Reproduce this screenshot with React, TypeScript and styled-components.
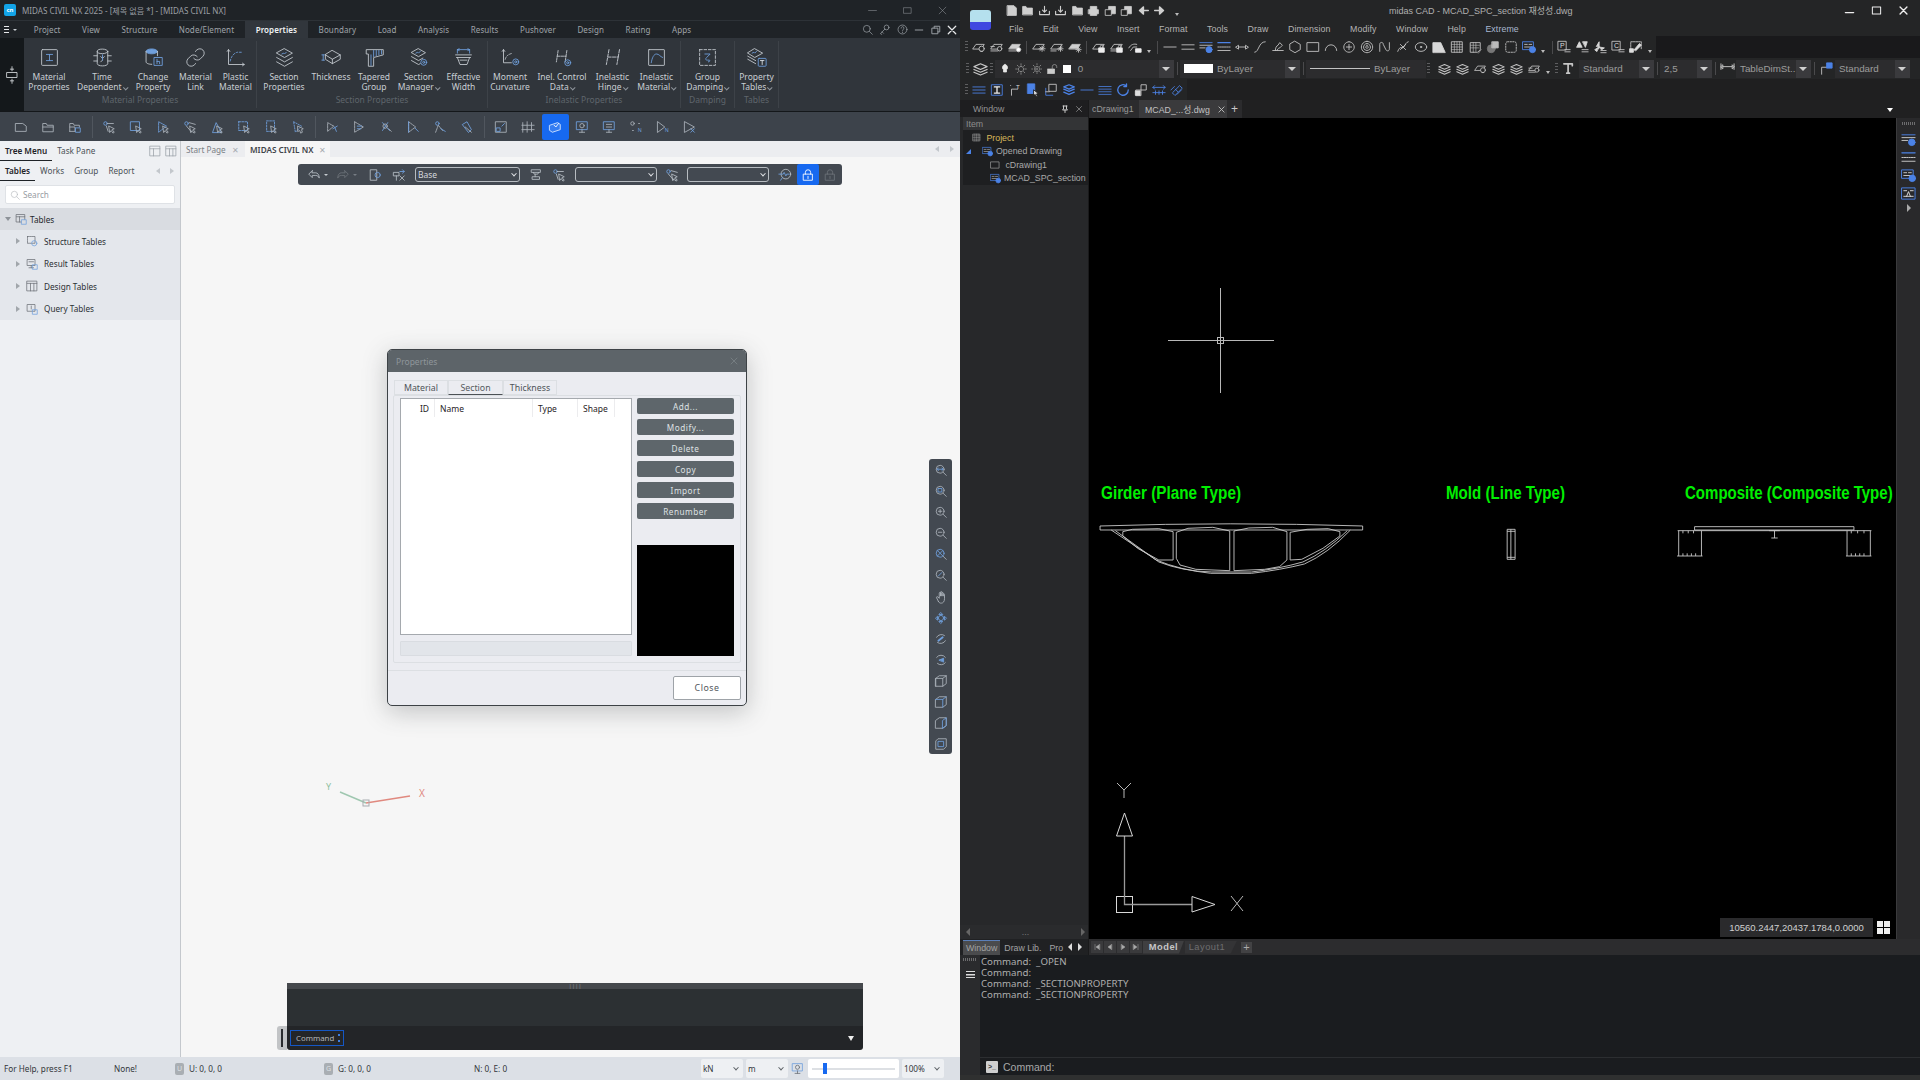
import React from 'react'
import styled, { createGlobalStyle } from 'styled-components'

const GlobalStyle = createGlobalStyle`
  html, body { margin: 0; padding: 0; width: 1920px; height: 1080px; overflow: hidden; background: #000; }
  #root { width: 1920px; height: 1080px; }
  * { box-sizing: border-box; }
  body { font-family: "Noto Sans", "Noto Sans CJK KR", sans-serif; }
`

const BLUE = '#6f9fdc'
const CADBLUE = '#4b82e6'

const Svg = styled.svg<{ $s: number; $c?: string; $w?: number }>`
  width: ${({ $s }) => $s}px;
  height: ${({ $s }) => $s}px;
  flex: none;
  fill: none;
  stroke: currentColor;
  stroke-width: ${({ $w }) => $w ?? 1};
  color: ${({ $c }) => $c ?? 'inherit'};
  stroke-linecap: round;
  stroke-linejoin: round;
`

const Ac = ({ children }: { children: React.ReactNode }) => <g stroke={BLUE}>{children}</g>

const gear = (cx: number, cy: number) => (
  <Ac>
    <circle cx={cx} cy={cy} r="3.4" />
    <circle cx={cx} cy={cy} r="1.2" />
  </Ac>
)

const hFrame = (
  <g strokeDasharray="3 1.2">
    <path d="M7 4 5 17M17 4l-2 13M6 10.500h10" />
  </g>
)

const ribbonIcons: Record<string, React.ReactNode> = {
  material: (
    <>
      <rect x="3" y="3" width="18" height="18" rx="1" />
      <path d="M8.500 8.500h7M12 8.500v7M8.500 15.500h7" stroke={BLUE} />
    </>
  ),
  timeDep: (
    <>
      <ellipse cx="12" cy="5" rx="6" ry="2.600" />
      <path d="M6 5v14c0 1.500 2.700 2.600 6 2.600s6-1.100 6-2.600V5" />
      <path d="M2 10h4M18 10h4M2 16h4M18 16h4M10 11l2 2 2-2M10 17l2-2" />
      <Ac><path d="M12 9v6" /></Ac>
    </>
  ),
  change: (
    <>
      <ellipse cx="10" cy="5" rx="6.500" ry="2.800" fill={BLUE} stroke={BLUE} />
      <path d="M3.500 5v12c0 1.500 2.800 2.800 6.500 2.800" />
      <path d="M16.500 5v5" />
      <rect x="13" y="12" width="9" height="9" stroke={BLUE} />
      <path d="M16 14v5M16 16.500h3v2.500" stroke={BLUE} />
    </>
  ),
  link: (
    <>
      <path d="M10 13a5 5 0 0 0 7.540.54l3-3a5 5 0 0 0-7.070-7.070l-1.720 1.710" />
      <path d="M14 11a5 5 0 0 0-7.540-.54l-3 3a5 5 0 0 0 7.070 7.070l1.710-1.710" />
    </>
  ),
  plastic: (
    <>
      <path d="M4 3v17h18M2.500 5 4 3l1.500 2M20 18.500l2 1.500-2 1.500" />
      <path d="M6 16c1-5 4-9 8-10h5" stroke={BLUE} strokeDasharray="2 2" />
    </>
  ),
  section: (
    <>
      <path d="M12 2 21 7l-9 5-9-5zM3 12l9 5 9-5M3 17l9 5 9-5" />
      <path d="M9 8l2-1 1 1 2-2" stroke={BLUE} />
    </>
  ),
  thickness: (
    <>
      <path d="M13 4l9 5-9 5-8-5zM5 9v5l8 5 9-5V9M13 14v5" />
      <path d="M1 9h3M2.500 9v6M1 15h3" stroke={BLUE} />
    </>
  ),
  tapered: (
    <>
      <path d="M3 3h19v6l-11 3v10H5V8H3z" />
      <path d="M11 4v7M14 4v6M17 4v5M20 4v4M8 9v12" stroke={BLUE} />
    </>
  ),
  manager: (
    <>
      <path d="M12 2 20 6.500 12 11 4 6.500zM4 11l8 4.500 5-2.800M4 15.500 12 20l2-1" />
      <path d="M9 7l2-1 1 1 2-2" stroke={BLUE} />
      {gear(18, 17.5)}
    </>
  ),
  effective: (
    <>
      <path d="M3 9h18M4 12h16M5 12l3 8h8l3-8M8 15h8" />
      <path d="M5 3h14M5 3v4M19 3v4M7 2l-2 1 2 1M17 2l2 1-2 1" stroke={BLUE} />
    </>
  ),
  moment: (
    <>
      <path d="M4 3v15h9M2.500 5 4 3l1.500 2" />
      <path d="M6 14c1-4 4-6 9-7" strokeDasharray="2 2" />
      {gear(18, 17)}
    </>
  ),
  inelControl: (
    <>
      {hFrame}
      {gear(18, 18)}
    </>
  ),
  hinge: (
    <g stroke="#cfd4da" strokeDasharray="3.500 1.500">
      <path d="M8 3 5 20M20 3l-3 17M7 11.500h12" />
    </g>
  ),
  inelMaterial: (
    <>
      <rect x="3" y="3" width="18" height="18" rx="0.5" />
      <path d="M6 18c1-6 3-10 6-10s4 3 7 4" stroke={BLUE} />
    </>
  ),
  damping: (
    <>
      <path d="M3 3h18v18H3z" strokeDasharray="3 2" />
      <path d="M9 8h6l-4 4c-2 2-1 3 1 3h2c1 0 1 2-1 2" stroke={BLUE} />
    </>
  ),
  propTables: (
    <>
      <path d="M10 2l9 5-9 5-8-5zM2 10.500l9 5M2 14l9 5" />
      <path d="M7 7l2-1 1 1 2-2" stroke={BLUE} />
      <rect x="14" y="13" width="9" height="9" rx="1" stroke={BLUE} />
      <path d="M16.500 15.500h4M18.500 15.500v4.500" stroke="#dfe3e8" />
    </>
  ),
}

const cursor = <path d="M8 7l6 3-2.500 1L14 14l-1.500 1-2-3L9 14z" />

const toolIcons: Record<string, React.ReactNode> = {
  doc: <path d="M2 4h8l4 3v6H2z" />,
  folder: <path d="M2 13V4h4l1 2h7v7zM2 8h12" />,
  folderSave: (
    <>
      <path d="M2 13V4h4l1 2h6v2" />
      <path d="M2 8h6v5H2" />
      <rect x="9" y="9" width="5" height="5" stroke={BLUE} />
    </>
  ),
  sel1: (<><circle cx="4" cy="4" r="2" stroke={BLUE} /><path d="M6 4h7M5 7l2 6" />{cursor}</>),
  sel2: (<><rect x="2" y="2" width="10" height="10" stroke={BLUE} />{cursor}</>),
  sel3: (<><path d="M3 2l9 5-9 7z" stroke={BLUE} strokeDasharray="2 1" />{cursor}</>),
  sel4: (<><circle cx="4" cy="4" r="2" stroke={BLUE} /><path d="M4 7l6 7M7 3l7 2" />{cursor}</>),
  sel5: (<><path d="M3 14 7 3l6 11z" stroke={BLUE} />{cursor}</>),
  sel6: (<><rect x="2" y="2" width="10" height="10" stroke={BLUE} strokeDasharray="2 1.500" />{cursor}</>),
  sel7: (<><rect x="3" y="1" width="9" height="12" stroke={BLUE} strokeDasharray="2 1.500" />{cursor}</>),
  sel8: (<><path d="M3 2l9 5-7 7z" stroke={BLUE} strokeDasharray="1.500 1.500" /><path d="M8 7l6 3-2 1 1 3-2 1-1-3-2 1z" /></>),
  act1: (<><path d="M3 3l7 4-7 6z" strokeDasharray="2 1" /><path d="M9 10l5-3M11 8l2 5" stroke={BLUE} /></>),
  act2: (<><path d="M3 2l10 6-10 6z" strokeDasharray="3 1" /><path d="M6 7h5M6 10h4" stroke={BLUE} /></>),
  act3: (<><path d="M4 3l8 9M10 3l-6 9" stroke={BLUE} /><circle cx="7" cy="7" r="2.500" /><path d="M11 10l3 3" /></>),
  act4: (<><path d="M3 2l8 6-8 6z" strokeDasharray="2 1" /><path d="M3 2v12M10 9l4 4" stroke={BLUE} /></>),
  act5: (<><circle cx="5" cy="4" r="2" stroke={BLUE} /><path d="M3 14l3-8 5 6" strokeDasharray="2 1" /><path d="M9 10l5 3" stroke={BLUE} /></>),
  act6: (<><path d="M3 5l5-3 5 9-3 3z" stroke={BLUE} /><path d="M6 8l7 6" /></>),
  view1: (<><rect x="2" y="2" width="12" height="12" /><rect x="3" y="9" width="4" height="4" stroke={BLUE} /><path d="M9 7l3-3" stroke={BLUE} /></>),
  view2: (<path d="M2 3v11M7 2v12M12 3v10M1 6h14M1 11h14" />),
  view3: (<><path d="M2 6l9-3 3 2v6l-9 3-3-2z" fill="#ffffff22" stroke="#d7e7ff" /><path d="M7 6l2 2 3-4" stroke="#fff" /></>),
  view4: (<><rect x="2" y="2" width="12" height="9" stroke={BLUE} /><circle cx="8" cy="6.500" r="2.500" /><path d="M8 11v3M5 14h6" /></>),
  view5: (<><rect x="2" y="2" width="12" height="9" stroke={BLUE} /><path d="M5 5h6M5 8h6M8 11v3M5 14h6" /></>),
  view6: (<><circle cx="4" cy="4" r="2" /><path d="M11 4h1M4 12h1" /><text x="10" y="14" fontSize="6" stroke="none" fill={BLUE}>N</text></>),
  view7: (<><path d="M2 2l8 6-8 6z" /><text x="10" y="14" fontSize="6" stroke="none" fill={BLUE}>N</text></>),
  view8: (<><path d="M2 2l11 6-11 6z" /><path d="M9 10l4 4M13 10l-4 4" stroke={BLUE} /></>),
  undo: <path d="M6 3 2 7l4 4V8.500h4c2 0 3 1 4 3 0-4-2-6-4-6H6z" />,
  redo: <path d="M10 3l4 4-4 4V8.500H6c-2 0-3 1-4 3 0-4 2-6 4-6h4z" />,
  page: (<><path d="M3 2h7v12H3z" /><circle cx="11" cy="8" r="3" stroke={BLUE} /></>),
  mesh: (<><path d="M2 5h6v4H2zM5 9v5M9 9l5 5M14 9l-5 5" /><path d="M9 4h5M12 2l2 2-2 2" stroke={BLUE} /></>),
  ibeam: <path d="M3 2h10v3H3zM5 5l1 2h4l1-2M7 7v3M4 10h8v3H4z" />,
  lock: (<><rect x="3" y="7" width="10" height="7" /><path d="M5 7V5a3 3 0 0 1 6 0v2M8 9.500v2.500" /></>),
  chat: (<><circle cx="9" cy="7" r="5.500" /><path d="M1 7h5l1-2 2 4 1-2h3M5 11l-2 3" stroke={BLUE} /></>),
  zFit: (<><circle cx="7" cy="6" r="4.500" /><path d="M4 6h6M5 4.500 3.500 6 5 7.500M9 4.500 10.500 6 9 7.500" stroke={BLUE} /><path d="M10.500 9.500 14 13" /></>),
  zBox: (<><circle cx="7" cy="6" r="4.500" /><rect x="5" y="4" width="4" height="4" stroke={BLUE} /><path d="M10.500 9.500 14 13" /></>),
  zIn: (<><circle cx="7" cy="6" r="4.500" /><path d="M5 6h4M7 4v4M10.500 9.500 14 13" /></>),
  zOut: (<><circle cx="7" cy="6" r="4.500" /><path d="M5 6h4M10.500 9.500 14 13" /></>),
  zDyn: (<><circle cx="7" cy="6" r="4.500" stroke={BLUE} /><path d="M4 3l6 6M10 3 4 9" stroke={BLUE} /><path d="M10.500 9.500 14 13" /></>),
  zPrev: (<><circle cx="7" cy="6" r="4.500" /><path d="M5 8l4-4" stroke={BLUE} /><path d="M10.500 9.500 14 13" /></>),
  hand: <path d="M5 13 3 9c-.5-1 .5-2 1.500-1L6 9.500V3.500c0-1 1.500-1 1.500 0V7 2.500c0-1 1.500-1 1.500 0V7 3.500c0-1 1.500-1 1.500 0V7 5c0-1 1.500-1 1.500 0v5c0 3-1.500 5-3.500 5H7.500C6.500 15 5.500 14 5 13z" />,
  orbit: (<><circle cx="8" cy="8" r="3" stroke={BLUE} /><path d="M8 2l2 2H6zM8 14l2-2H6zM2 8l2-2v4zM14 8l-2-2v4z" stroke={BLUE} /></>),
  rotate: (<><path d="M3 6a6 6 0 0 1 9-2M13 10a6 6 0 0 1-9 2" /><path d="M5 10l5-4" stroke={BLUE} strokeWidth="2" /></>),
  rotate2: (<><path d="M3 5a6 6 0 0 1 10 0M13 11a6 6 0 0 1-9 1" /><path d="M6 8l5-2v4z" stroke={BLUE} fill={BLUE} /></>),
  cube: <path d="M2 5l4-3h8v9l-4 3H2zM2 5h8v9M10 5l4-3M2 5v9" />,
  cubeBlue: (<><path d="M2 5l4-3h8v9l-4 3H2z" /><path d="M2 5h8l4-3M10 5v9" stroke={BLUE} /></>),
  cubeSide: (<><path d="M2 5l4-3h8v9l-4 3H2z" /><path d="M10 5l4-3v9l-4 3z" stroke={BLUE} /></>),
  cubeFront: (<><path d="M5 2h9v9l-3 3H2V5z" /><rect x="5" y="5" width="6" height="6" stroke={BLUE} /></>),
  paneA: (<><rect x="1.500" y="1.500" width="13" height="13" /><path d="M1.500 5h13M6 5v9.500" /></>),
  paneB: (<><rect x="1.500" y="1.500" width="13" height="13" /><path d="M1.500 5h13M6 5v9.500M10.500 5v9.500" /></>),
  tableT: (<><rect x="2" y="2" width="11" height="10" /><path d="M2 5h11M6 5v7" /><rect x="9" y="9" width="6" height="6" stroke={BLUE} fill="#d9dce1" /></>),
  tableS: (<><rect x="2" y="2" width="10" height="9" strokeDasharray="2 1" /><circle cx="11" cy="11" r="3.500" stroke={BLUE} /></>),
  tableR: (<><rect x="2" y="2" width="10" height="8" /><path d="M4 5h6M7 10v3M4 13h6" /><rect x="9" y="9" width="6" height="6" stroke={BLUE} /></>),
  tableD: (<><rect x="1.500" y="1.500" width="13" height="13" /><path d="M1.500 4.500h13M6 4.500v10M10.500 4.500v10" /></>),
  tableQ: (<><rect x="2" y="2" width="10" height="9" /><path d="M7 4v4" /><rect x="9" y="9" width="6" height="6" stroke={BLUE} /></>),
}

const cadSlab = <path d="M1 10 4.500 5H14l-3 5z" />
const cadIcons: Record<string, React.ReactNode> = {
  qDoc: <path d="M3 2h8l3 3v9H3z" fill="#cfcfcf" stroke="#cfcfcf" />,
  qFolder: <path d="M2 13V3h4l1 2h7v8z" fill="#cfcfcf" stroke="#cfcfcf" />,
  qImport: <path d="M2 9v4h12V9M8 3v7M5.500 7.500 8 10l2.500-2.500" strokeWidth="1.400" />,
  qPrint: <path d="M2 7h12v5H2zM4 7V3h8v4M4 12v2h8v-2" fill="#cfcfcf" stroke="#cfcfcf" />,
  qSheet: (<><path d="M6 3h8v9H6z" fill="#cfcfcf" stroke="#cfcfcf" /><rect x="2" y="7" width="7" height="7" fill="#222" /></>),
  qBack: <path d="M14 8H4M8 3.500 3 8l5 4.500z" fill="#cfcfcf" stroke="#cfcfcf" strokeWidth="1.600" />,
  qFwd: <path d="M2 8h10M8 3.500 13 8l-5 4.500z" fill="#cfcfcf" stroke="#cfcfcf" strokeWidth="1.600" />,
  slabBulb: (<>{cadSlab}<circle cx="11" cy="10" r="3" fill="#242526" /><path d="M10 13h2" /></>),
  slabLines: (<>{cadSlab}<path d="M1 12.500h8M1 7.500h4" /><circle cx="11" cy="10" r="2.500" fill="#242526" /></>),
  slabFill: (<><path d="M1 10 4.500 5H14l-3 5z" fill="#cfcfcf" /><path d="M1 12.500h8" /><circle cx="12" cy="11" r="2.500" fill="#fff" /></>),
  slabStar: (<>{cadSlab}<path d="M8 10h7M11.500 7v6M9 8l5 4M14 8l-5 4" /></>),
  slabStarL: (<>{cadSlab}<path d="M1 12.500h6M9 10h6M12 7v6M10 8l4 4M14 8l-4 4" /></>),
  slabStarF: (<><path d="M1 10 4.500 5H14l-3 5z" fill="#cfcfcf" /><path d="M9 11h6M12 8v6M10 9l4 4M14 9l-4 4" /></>),
  slabLock: (<>{cadSlab}<rect x="8" y="9" width="6" height="5" fill="#eee" stroke="#eee" /><path d="M9.500 9V7.500a1.500 1.500 0 0 1 3 0V9" /></>),
  slabLockL: (<>{cadSlab}<path d="M1 12.500h6" /><rect x="8" y="9" width="6" height="5" fill="#eee" stroke="#eee" /><path d="M9.500 9V7.500a1.500 1.500 0 0 1 3 0V9" /></>),
  slabHook: (<><path d="M1 9c2-4 6-5 9-4M3 12l3-4h4" /><rect x="9" y="10" width="6" height="4" fill="#eee" stroke="#eee" /></>),
  line: <path d="M1 8h14" />,
  dbl: <path d="M1 5.500h14M1 10.500h14" />,
  lineInfo: (<><path d="M1 3h14" stroke={CADBLUE} /><path d="M1 6h14M1 9h6" /><circle cx="11.500" cy="11" r="3.500" fill={CADBLUE} stroke={CADBLUE} /></>),
  lines: (<><path d="M1 3h14" stroke={CADBLUE} strokeWidth="1.400" /><path d="M1 8h14" strokeDasharray="1.500 1" /><path d="M1 12h14" /></>),
  arrowLine: <path d="M4 8h8M1 8l3-2v4zM15 8l-3-2v4z" />,
  curve: <path d="M2 14c5 0 4-12 12-12" />,
  pen: <path d="M2 12h12M5 12c0-3 1-5 3-6l2-3 3 3-3 3c-2 .5-3 2-3 3" />,
  hexagon: <path d="M8 1.500 14 5v6l-6 3.500L2 11V5z" />,
  rect: <rect x="1.500" y="3" width="13" height="10" />,
  arc: <path d="M1.500 12a6.500 6.500 0 0 1 13 0" />,
  circlePlus: <path d="M8 2a6 6 0 1 0 .01 0M5 8h6M8 5v6" />,
  circles: <path d="M8 1.500a6.500 6.500 0 1 0 .01 0M8 4a4 4 0 1 0 .01 0M8 6.500a1.500 1.500 0 1 0 .01 0" />,
  polyN: <path d="M2 13V5c0-3 4-3 4 0l3 6c1 2 4 2 4-1V3" />,
  polyM: <path d="M2 13c3-8 5-2 7-5s2-5 5-6M5 5l6 6M11 5l-6 6" />,
  ellipseDot: (<><ellipse cx="8" cy="8" rx="6.500" ry="5" /><circle cx="8" cy="8" r="0.800" /></>),
  triFill: <path d="M1 14V3h9l5 11z" fill="#d8d8d8" stroke="#d8d8d8" />,
  hatch: (<><rect x="2" y="2" width="12" height="12" /><path d="M2 5h12M2 8h12M2 11h12M5 2v12M8 2v12M11 2v12" strokeWidth="0.700" /></>),
  hatchPen: (<><path d="M3 3h11v8l-3 3H3z" /><path d="M3 6h10M3 9h9M6 3v11M9 3v10M12 15l3-4" strokeWidth="0.700" /></>),
  blobs: (<><circle cx="6" cy="10" r="4.500" fill="#777" stroke="#777" /><rect x="7" y="2" width="7" height="7" fill="#bbb" stroke="#bbb" /></>),
  dashSq: <rect x="2" y="2" width="12" height="12" rx="2" strokeDasharray="1.500 1.500" />,
  gridInfo: (<><rect x="1" y="2" width="12" height="9" stroke={CADBLUE} /><path d="M3 5h3M8 5h3M3 8h8" /><circle cx="12" cy="11" r="3.500" fill={CADBLUE} stroke={CADBLUE} /></>),
  gridBlue: (<><rect x="1" y="2" width="14" height="12" stroke={CADBLUE} /><path d="M3 5h3M10 5h3M3 11h10M6 11l2-5 2 5" stroke="#ddd" /></>),
  letterP: (<><rect x="1.500" y="1.500" width="9" height="10" /><text x="3.500" y="9.500" fontSize="8" stroke="none" fill="#ddd">P</text><path d="M9 11h6M9 13.500h6" /></>),
  triPair: (<><path d="M2 8l3-6 3 6zM9 2h5l-2 6z" fill="#d8d8d8" stroke="#d8d8d8" /><path d="M8 11h7M8 13.500h7" /></>),
  fan: (<><path d="M7 8V2l-3 5zM7 8l6 1-3 2zM7 8l-5 3 2 2z" fill="#d8d8d8" stroke="#d8d8d8" /><path d="M9 12h6M9 14.500h6" /></>),
  letterC: (<><rect x="1.500" y="1.500" width="9" height="10" /><text x="3.500" y="9.500" fontSize="8" stroke="none" fill="#ddd">C</text><path d="M9 11h6M9 13.500h6" /></>),
  sqPen: (<><path d="M2 11V2h12v9" strokeDasharray="2 1" /><rect x="1" y="10" width="4" height="4" fill="#ddd" stroke="#ddd" /><path d="M6 11l6-7 2 2-6 6z" fill="#ddd" stroke="#ddd" /></>),
  stack: <path d="M8 3l7 3-7 3-7-3zM1 9l7 3 7-3M1 12l7 3 7-3" strokeWidth="1.300" />,
  thin: (<><path d="M1 8h14" stroke={CADBLUE} /></>),
  layerBulb: <path d="M8 2a4 4 0 0 1 2 7v3H6V9a4 4 0 0 1 2-7z" fill="#e8e8e8" stroke="#e8e8e8" />,
  sun: <path d="M8 4.500a3.500 3.500 0 1 0 .01 0M8 1v2M8 13v2M1 8h2M13 8h2M3 3l1.500 1.500M11.500 11.500 13 13M13 3l-1.500 1.500M3 13l1.500-1.500" />,
  sunDot: <path d="M8 4.500a3.500 3.500 0 1 0 .01 0M8 1v2M8 13v2M1 8h2M13 8h2M3 3l1.500 1.500M11.500 11.500 13 13M13 3l-1.500 1.500M3 13l1.500-1.500M6 7h4M6 9h4" strokeDasharray="1 1" />,
  padlock: (<><rect x="1" y="8" width="9" height="6" fill="#ccc" stroke="#ccc" /><path d="M7 8V5a3 3 0 0 1 6 0v1" /></>),
  text: <path d="M2 3h9v2M6.500 3v10M5 13h3" strokeWidth="1.800" />,
  dimArrow: <path d="M3 6h10M1 6l2-2v4zM15 6l-2-2v4zM1 3v6M15 3v6" />,
  leader: (<><path d="M3 14V6h7" /><rect x="9" y="1" width="6" height="6" fill={CADBLUE} stroke={CADBLUE} /></>),
  bar3: <path d="M1 4.500h14M1 8h14M1 11.500h14" stroke={CADBLUE} />,
  ibox: (<><rect x="2" y="2" width="12" height="12" stroke={CADBLUE} /><path d="M5 4.500h6M8 4.500v7M5 11.500h6" strokeWidth="1.500" stroke="#eee" /></>),
  coord: (<><path d="M4 14V7h7M3 3v-.1" /><text x="9" y="7" fontSize="7" stroke="none" fill="#ddd">T</text></>),
  blueCursor: (<><rect x="2" y="1" width="8" height="11" fill={CADBLUE} stroke={CADBLUE} /><path d="M9 8l5 4-2 .5 1 2.500-1.500.5-1-2.500L9 14z" fill="#ddd" stroke="#222" /></>),
  layout: (<><path d="M2 6v8h8" stroke={CADBLUE} /><rect x="6" y="1.500" width="8" height="8" /><path d="M2 10h4" /></>),
  stackBlue: <path d="M8 2l6 2.500-6 2.500-6-2.500zM2 7l6 2.500L14 7M2 10.500 8 13l6-2.500" stroke={CADBLUE} strokeWidth="1.400" />,
  lines4: <path d="M1 4h14M1 7h14M1 10h14M1 13h14" strokeWidth="0.900" stroke={CADBLUE} />,
  refresh: <path d="M14 8a6 6 0 1 1-2-4.500M12 1v3h-3" stroke={CADBLUE} strokeWidth="1.500" />,
  scale: (<><path d="M2 14V8h6V2h6v6H8v6z" /><rect x="2" y="9" width="5" height="5" fill="#ddd" stroke="#ddd" /></>),
  stretch: <path d="M1 5h14M3 3 1 5l2 2M13 3l2 2-2 2M1 11h14M4 9v4M8 9v4M12 9v4" stroke={CADBLUE} />,
  tilt: <path d="M3 11l8-8 3 3-8 8zM1 8l4-4M8 13l5-5M6 7l3 3" stroke={CADBLUE} />,
  navFirst: <path d="M4 3v10M13 3 6 8l7 5z" fill="#aaa" stroke="#aaa" />,
  navPrev: <path d="M11 3 4 8l7 5z" fill="#aaa" stroke="#aaa" />,
  navNext: <path d="M5 3l7 5-7 5z" fill="#aaa" stroke="#aaa" />,
  navLast: <path d="M12 3v10M3 3l7 5-7 5z" fill="#aaa" stroke="#aaa" />,
}

const Icon = ({ set, name, size = 14, color }: { set: Record<string, React.ReactNode>; name: string; size?: number; color?: string }) => {
  const box = set === ribbonIcons ? 24 : 16
  return (
    <Svg viewBox={`0 0 ${box} ${box}`} $s={size} $c={color}>
      {set[name]}
    </Svg>
  )
}

const Chevron = styled.span`
  display: inline-block;
  width: 3.500px;
  height: 3.500px;
  margin-left: 2px;
  border-right: 1px solid #8f959c;
  border-bottom: 1px solid #8f959c;
  transform: rotate(45deg) translate(-1px, -1px);
`

/* layout */

const Page = styled.div`
  display: grid;
  grid-template-columns: 960px 960px;
  width: 1920px;
  height: 1080px;
`

const CivilWindow = styled.div`
  display: flex;
  flex-direction: column;
  height: 1080px;
  font-size: 8.500px;
  color: #b9bec4;
  background: #f6f6f6;
`

const TitleBar = styled.div`
  display: flex;
  align-items: center;
  height: 20px;
  padding-left: 4px;
  gap: 6px;
  background: #1f2327;
  color: #9a9ea3;
  font-size: 8.100px;
`

const AppBadge = styled.span`
  display: flex;
  align-items: center;
  justify-content: center;
  width: 12px;
  height: 12px;
  border-radius: 2px;
  background: #12a4e8;
  color: #fff;
  font-size: 6px;
  font-weight: 700;
`

const WindowButtons = styled.div`
  display: flex;
  margin-left: auto;
  padding-right: 13px;
  gap: 26px;
  color: #8f9398;
`

const MenuBar = styled.div`
  display: flex;
  align-items: stretch;
  height: 18px;
  background: #1f2327;
  border-top: 1px solid #2d3237;
`

const Burger = styled.div`
  display: flex;
  align-items: center;
  width: 23px;
  padding-left: 4px;
  gap: 3px;
  color: #e6e8ea;
`

const BurgerLines = styled.span`
  width: 9px;
  height: 7px;
  border-top: 1px solid currentColor;
  border-bottom: 1px solid currentColor;
  background: linear-gradient(currentColor, currentColor) center / 100% 1px no-repeat;
`

const MenuTab = styled.div<{ $active?: boolean }>`
  display: flex;
  align-items: center;
  padding: 0 10.750px;
  background: ${({ $active }) => ($active ? '#31363c' : 'transparent')};
  color: ${({ $active }) => ($active ? '#f0f2f4' : '#9fa4aa')};
  font-size: 8px;
  font-weight: ${({ $active }) => ($active ? 600 : 400)};
  letter-spacing: 0.100px;
`

const MenuTools = styled.div`
  display: flex;
  align-items: center;
  margin-left: auto;
  padding-right: 3px;
  gap: 6.500px;
  color: #9fa4aa;
`

const RibbonBar = styled.div`
  display: flex;
  height: 74px;
  background: #30353b;
  border-bottom: 1px solid #14171a;
`

const RibbonSide = styled.div`
  display: flex;
  align-items: center;
  justify-content: center;
  width: 24px;
  background: #14181b;
  color: #d8dce0;
`

const RibbonGroup = styled.div<{ $w: number }>`
  display: flex;
  flex-direction: column;
  width: ${({ $w }) => $w}px;
  border-right: 1px solid #3d4248;
  margin: 3px 0 3px;
`

const RibbonItems = styled.div`
  display: flex;
  height: 54px;
`

const RibbonItem = styled.div<{ $w: number }>`
  display: flex;
  flex-direction: column;
  align-items: center;
  width: ${({ $w }) => $w}px;
  padding-top: 6px;
  color: #c4c9cf;
`

const RibbonLabel = styled.div`
  margin-top: 4px;
  text-align: center;
  line-height: 10px;
  white-space: nowrap;
  color: #c9ced3;
`

const RibbonCaption = styled.div`
  text-align: center;
  line-height: 10px;
  color: #5f656c;
`

const ToolStrip = styled.div`
  display: flex;
  align-items: center;
  height: 29px;
  padding-left: 7.500px;
  background: #3d434b;
  color: #a9b0b8;
`

const ToolCell = styled.div<{ $on?: boolean }>`
  display: flex;
  align-items: center;
  justify-content: center;
  width: 27px;
  height: 26px;
  border-radius: 2px;
  background: ${({ $on }) => ($on ? '#1769f0' : 'transparent')};
  color: ${({ $on }) => ($on ? '#e8f0ff' : 'inherit')};
`

const ToolSep = styled.span`
  width: 1px;
  height: 22px;
  margin: 0 3px;
  background: #50565e;
`

const CivilBody = styled.div`
  flex: 1;
  display: flex;
  min-height: 0;
`

const Sidebar = styled.aside`
  display: flex;
  flex-direction: column;
  width: 181px;
  background: #eef0f3;
  border-right: 1px solid #c4c8cd;
  color: #2b2f33;
  font-size: 8.200px;
`

const PaneTabs = styled.div`
  display: flex;
  align-items: stretch;
  height: 20px;
`

const PaneTab = styled.div<{ $on?: boolean }>`
  display: flex;
  align-items: center;
  padding: 0 5px;
  border-bottom: 1.500px solid ${({ $on }) => ($on ? '#1f2327' : 'transparent')};
  font-weight: ${({ $on }) => ($on ? 600 : 400)};
  color: ${({ $on }) => ($on ? '#1f2327' : '#4b5056')};
`

const PaneTools = styled.div<{ $gap: number; $end: number }>`
  display: flex;
  align-items: center;
  margin-left: auto;
  padding-right: ${({ $end }) => $end}px;
  gap: ${({ $gap }) => $gap}px;
  color: #9aa0a7;
`

const MiniArrow = styled.span<{ $dir: 'left' | 'right' }>`
  width: 0;
  height: 0;
  border-top: 3.500px solid transparent;
  border-bottom: 3.500px solid transparent;
  ${({ $dir }) => ($dir === 'left' ? 'border-right' : 'border-left')}: 4px solid #c3c7cc;
`

const SearchBox = styled.div`
  display: flex;
  align-items: center;
  height: 19px;
  margin: 4px 5px;
  padding-left: 4px;
  gap: 3px;
  background: #fff;
  border: 1px solid #dfe2e6;
  border-radius: 2px;
  color: #989da3;
`

const TreeRoot = styled.div`
  display: flex;
  align-items: center;
  height: 22px;
  padding-left: 5px;
  gap: 3.500px;
  background: #d9dce1;
  color: #23272b;
`

const TreeBranch = styled.div`
  display: flex;
  flex-direction: column;
  height: 90px;
  background: #e4e7ec;
`

const TreeRow = styled.div`
  display: flex;
  align-items: center;
  height: 22.500px;
  padding-left: 16px;
  gap: 6px;
  color: #2b2f33;
`

const Twisty = styled.span<{ $open?: boolean }>`
  width: 0;
  height: 0;
  ${({ $open }) =>
    $open
      ? 'border-left: 3.5px solid transparent; border-right: 3.5px solid transparent; border-top: 4px solid #8d9298;'
      : 'border-top: 3.5px solid transparent; border-bottom: 3.5px solid transparent; border-left: 4px solid #a1a6ab;'}
`

const TreeGlyph = styled.span`
  display: flex;
  color: #6d7278;
`

const Workspace = styled.div`
  flex: 1;
  display: flex;
  flex-direction: column;
  min-width: 0;
`

const DocTabs = styled.div`
  display: flex;
  align-items: stretch;
  height: 16px;
  background: #ecedf0;
`

const DocTab = styled.div<{ $on?: boolean }>`
  display: flex;
  align-items: center;
  justify-content: space-between;
  width: ${({ $on }) => ($on ? 85 : 62)}px;
  margin-right: 2px;
  padding: 0 4px 0 5px;
  background: ${({ $on }) => ($on ? '#f6f6f6' : 'transparent')};
  color: ${({ $on }) => ($on ? '#3f4449' : '#7a7f85')};
  font-size: 8.200px;
  font-weight: ${({ $on }) => ($on ? 600 : 400)};
`

const TabClose = styled.span`
  color: #a7abb0;
  font-size: 8px;
  font-weight: 400;
`

const DocArrows = styled.div`
  display: flex;
  align-items: center;
  margin-left: auto;
  padding-right: 6px;
  gap: 11px;
`

const Viewport = styled.div`
  flex: 1;
  position: relative;
  background: #f6f6f6;
`

const FloatBar = styled.div`
  position: absolute;
  left: 117px;
  top: 7px;
  display: flex;
  align-items: center;
  width: 544px;
  height: 21px;
  padding-left: 7px;
  background: #434951;
  border-radius: 3px;
  color: #b5bbc2;
`

const FloatIcon = styled.span<{ $w?: number; $on?: boolean; $dim?: boolean }>`
  display: flex;
  align-items: center;
  justify-content: center;
  width: ${({ $w }) => $w ?? 22}px;
  height: 21px;
  background: ${({ $on }) => ($on ? '#1769f0' : 'transparent')};
  border-radius: 2px;
  color: ${({ $on, $dim }) => ($on ? '#fff' : $dim ? '#6b7178' : 'inherit')};
`

const FloatCaret = styled.span<{ $dim?: boolean }>`
  width: 0;
  height: 0;
  margin: 0 6px 0 1px;
  border-left: 2px solid transparent;
  border-right: 2px solid transparent;
  border-top: 2px solid ${({ $dim }) => ($dim ? '#777d84' : '#c6cbd0')};
`

const FloatSelect = styled.div<{ $w: number }>`
  display: flex;
  align-items: center;
  justify-content: space-between;
  width: ${({ $w }) => $w}px;
  height: 15px;
  padding: 0 3px 0 2px;
  margin: 0 4px;
  border: 1px solid #b7bcc1;
  border-radius: 3px;
  color: #d5d8dc;
`

const SelectTick = styled.span<{ $c?: string }>`
  width: 4px;
  height: 4px;
  border-right: 1.500px solid ${({ $c }) => $c ?? '#e1e3e6'};
  border-bottom: 1.500px solid ${({ $c }) => $c ?? '#e1e3e6'};
  transform: rotate(45deg) translate(-1px, -1px);
`

const ZoomBar = styled.div`
  position: absolute;
  left: 748px;
  top: 302px;
  display: flex;
  flex-direction: column;
  align-items: center;
  width: 23px;
  height: 295px;
  padding-top: 1px;
  background: #434951;
  border-radius: 3px;
  color: #aab1b9;
`

const ZoomCell = styled.span`
  display: flex;
  align-items: center;
  justify-content: center;
  width: 21px;
  height: 21px;
`

const Gizmo = styled.svg`
  position: absolute;
  left: 140px;
  top: 620px;
  width: 110px;
  height: 40px;
  font-family: "Noto Sans", sans-serif;
`

const Dialog = styled.div`
  position: absolute;
  left: 206px;
  top: 192px;
  display: flex;
  flex-direction: column;
  width: 360px;
  height: 357px;
  background: #ebecf1;
  border: 1px solid #3d4246;
  border-radius: 5px;
  box-shadow: 0 6px 24px rgba(60, 64, 70, 0.28);
  overflow: hidden;
  color: #33373b;
`

const DialogHead = styled.div`
  display: flex;
  align-items: center;
  justify-content: space-between;
  height: 22px;
  padding: 0 8px;
  background: #5d6469;
  color: #8f969b;
`

const DialogTabs = styled.div`
  display: flex;
  height: 15px;
  margin: 8px 0 0 6px;
`

const DialogTab = styled.div<{ $on?: boolean; $w: number }>`
  display: flex;
  align-items: center;
  justify-content: center;
  width: ${({ $w }) => $w}px;
  border: 1px solid #dcdfe3;
  border-bottom: ${({ $on }) => ($on ? '1.500px solid #4c5156' : '1px solid #dcdfe3')};
  color: ${({ $on }) => ($on ? '#565b60' : '#4f5459')};
  font-size: 8.800px;
`

const DialogFrame = styled.div`
  display: grid;
  grid-template-columns: 232px 97px;
  column-gap: 5px;
  height: 268px;
  margin: 0 5px 0 5px;
  padding: 2px 0 6px 6px;
  border: 1px solid #dcdfe3;
  border-radius: 2px;
`

const DialogLeft = styled.div`
  display: flex;
  flex-direction: column;
  gap: 6px;
`

const DialogList = styled.div`
  height: 237px;
  background: #fff;
  border: 1px solid #a5a9ae;
`

const ListHead = styled.div`
  display: grid;
  grid-template-columns: 34px 98px 45px 37px;
  height: 18px;
  color: #1f2226;
`

const ListCol = styled.div<{ $end?: boolean }>`
  display: flex;
  align-items: center;
  justify-content: ${({ $end }) => ($end ? 'flex-end' : 'flex-start')};
  padding: 0 5px;
  border-right: 1px solid #ececee;
`

const DialogNote = styled.div`
  height: 15px;
  background: #e2e5ea;
  border: 1px solid #d9dce1;
  border-radius: 1px;
`

const DialogRight = styled.div`
  display: flex;
  flex-direction: column;
  gap: 5px;
`

const GreyButton = styled.div`
  display: flex;
  align-items: center;
  justify-content: center;
  height: 16px;
  background: #5e666b;
  border-radius: 2px;
  color: #dfe2e4;
  font-size: 8.200px;
  letter-spacing: 0.500px;
`

const Preview = styled.div`
  height: 111px;
  margin-top: auto;
  background: #000;
`

const DialogFoot = styled.div`
  display: flex;
  justify-content: flex-end;
  margin-top: 7px;
  padding: 5px 5px 0;
  border-top: 1px solid #dcdfe3;
`

const CloseButton = styled.div`
  display: flex;
  align-items: center;
  justify-content: center;
  width: 68px;
  height: 24px;
  background: #fff;
  border: 1px solid #9ea3a8;
  border-radius: 2px;
  color: #52575c;
  font-size: 8.800px;
  letter-spacing: 0.500px;
`

const CommandDock = styled.div`
  position: absolute;
  left: 96px;
  top: 826px;
  display: grid;
  grid-template-columns: 10px 576px;
  grid-template-rows: 43px 24px;
  width: 586px;
  height: 67px;
`

const DockUpper = styled.div`
  grid-column: 2;
  display: flex;
  flex-direction: column;
  background: #2c3033;
  border-radius: 3px 3px 0 0;
`

const DockGrip = styled.div`
  display: flex;
  align-items: center;
  justify-content: center;
  height: 6px;
  background: #46494d;
  color: #8a8e92;
  font-size: 6px;
  line-height: 6px;
`

const DockHandle = styled.div`
  grid-column: 1;
  grid-row: 2;
  display: flex;
  align-items: center;
  justify-content: center;
  background: #c2c4c6;
  border-radius: 3px 0 0 3px;
`

const DockBar = styled.span`
  width: 2px;
  height: 18px;
  background: #2a2c2f;
`

const DockInput = styled.div`
  grid-column: 2;
  grid-row: 2;
  display: flex;
  align-items: center;
  justify-content: space-between;
  padding: 0 9px 0 3px;
  background: #232528;
  border-radius: 0 0 3px 3px;
`

const DockCommand = styled.div`
  display: flex;
  align-items: center;
  justify-content: space-between;
  width: 54px;
  height: 16px;
  padding: 0 3px 0 5px;
  border: 1px solid #1557c5;
  color: #b4b7ba;
  font-size: 7.800px;
`

const DockDots = styled.span`
  width: 2px;
  height: 8px;
  background: linear-gradient(#3f7fe0 0 2px, transparent 2px 6px, #3f7fe0 6px);
`

const WhiteDown = styled.span`
  border-left: 3.500px solid transparent;
  border-right: 3.500px solid transparent;
  border-top: 5px solid #eee;
`

const StatusBar = styled.div`
  display: flex;
  align-items: center;
  height: 23px;
  background: #dce0e6;
  color: #33373b;
  font-size: 8.200px;
`

const StatusCell = styled.div<{ $w: number; $pad?: number }>`
  display: flex;
  align-items: center;
  gap: 5px;
  width: ${({ $w }) => $w}px;
  padding-left: ${({ $pad }) => $pad ?? 0}px;
`

const StatusChip = styled.span`
  display: flex;
  align-items: center;
  justify-content: center;
  width: 9px;
  height: 12px;
  border-radius: 2px;
  background: #a9aeb3;
  color: #dfe2e5;
  font-size: 7px;
`

const StatusSelect = styled.div<{ $w: number }>`
  display: flex;
  align-items: center;
  justify-content: space-between;
  width: ${({ $w }) => $w}px;
  height: 19px;
  margin-right: 3px;
  padding: 0 5px 0 2px;
  background: #eef0f3;
  border-radius: 2px;
`

const SliderBox = styled.div`
  display: flex;
  align-items: center;
  position: relative;
  width: 91px;
  height: 19px;
  margin: 0 3px 0 4px;
  padding: 0 4px;
  background: #fff;
  border-radius: 2px;
`

const SliderTrack = styled.span`
  width: 100%;
  height: 2px;
  background: #dde0e4;
`

const SliderThumb = styled.span`
  position: absolute;
  left: 15px;
  top: 4px;
  width: 4px;
  height: 11px;
  background: #1769f0;
`

/* midas CAD */

const CadWindow = styled.div`
  display: flex;
  flex-direction: column;
  height: 1080px;
  background: #242526;
  color: #b8b8b8;
  font-family: "Liberation Sans", "Noto Sans CJK KR", sans-serif;
  font-size: 9.300px;
`

const CadHead = styled.div`
  display: flex;
  height: 36px;
`

const CadLogoCell = styled.div`
  display: flex;
  align-items: center;
  width: 49px;
  padding: 4px 0 0 10px;
`

const CadLogo = styled.div`
  width: 21px;
  height: 20px;
  border-radius: 3px;
  background: linear-gradient(#b5e0ee 0 62%, #3f48e0 62%);
`

const CadHeadRight = styled.div`
  flex: 1;
  display: flex;
  flex-direction: column;
`

const CadQuick = styled.div`
  display: flex;
  align-items: center;
  height: 21px;
  margin-left: -6px;
  color: #cfcfcf;
`

const QuickCell = styled.span`
  display: flex;
  justify-content: center;
  width: 16.500px;
`

const QuickCaret = styled.span`
  width: 0;
  height: 0;
  margin: 8px 4px 0 7px;
  border-left: 2px solid transparent;
  border-right: 2px solid transparent;
  border-top: 3px solid #bbb;
`

const CadTitle = styled.div`
  width: 190px;
  margin-left: 206px;
  color: #b0b0b0;
  font-size: 9px;
  white-space: nowrap;
`

const CadControls = styled.div`
  display: flex;
  align-items: center;
  margin-left: auto;
  gap: 16px;
  padding-right: 11px;
  color: #eee;
`

const CadMenu = styled.div`
  display: flex;
  height: 15px;
  align-items: center;
  gap: 19.500px;
  font-size: 8.800px;
`

const CadMenuItem = styled.span<{ $blue?: boolean }>`
  color: ${({ $blue }) => ($blue ? '#a9b8d0' : '#b4b4b4')};
  letter-spacing: 0.100px;
`

const CadRow = styled.div<{ $h: number; $bg: string; $pad?: number }>`
  display: flex;
  align-items: center;
  height: ${({ $h }) => $h}px;
  padding-left: ${({ $pad }) => $pad ?? 0}px;
  background: ${({ $bg }) => $bg};
  color: #c6c6c6;
`

const CadTools = styled.div<{ $w: number }>`
  display: flex;
  align-items: center;
  width: ${({ $w }) => $w}px;
  height: 100%;
  padding-left: 4px;
  background: #242526;
`

const Grip = styled.span<{ $after?: number }>`
  width: 3px;
  height: 12px;
  margin: 0 ${({ $after }) => $after ?? 2}px 0 1px;
  background: repeating-linear-gradient(#5e5e60 0 1px, transparent 1px 3px);
`

const CadCell = styled.span<{ $w?: number }>`
  display: flex;
  align-items: center;
  justify-content: center;
  width: ${({ $w }) => $w ?? 18}px;
`

const CadCaret = styled.span`
  width: 0;
  height: 0;
  margin: 8px 4px 0 3px;
  border-left: 2px solid transparent;
  border-right: 2px solid transparent;
  border-top: 3px solid #bbb;
`

const CadSep = styled.span`
  width: 1px;
  height: 13px;
  margin: 0 2.500px;
  background: #4a4a4c;
`

const Combo = styled.div<{ $w: number }>`
  display: flex;
  align-items: center;
  position: relative;
  flex: none;
  width: ${({ $w }) => $w}px;
  height: 18px;
  padding-left: 4px;
  gap: 4px;
  background: #2c2c2e;
  color: #9c9c9c;
  font-size: 9.800px;
`

const ComboArrow = styled.span`
  position: absolute;
  right: 0;
  top: 0;
  width: 15px;
  height: 18px;
  background: #3a3a3d;
  &::after {
    content: '';
    position: absolute;
    left: 3px;
    top: 7px;
    border-left: 4px solid transparent;
    border-right: 4px solid transparent;
    border-top: 4px solid #cfcfcf;
  }
`

const Swatch = styled.span<{ $w: number }>`
  width: ${({ $w }) => $w}px;
  height: ${({ $w }) => ($w > 20 ? 9 : 8)}px;
  background: #fff;
`

const LineSample = styled.span`
  width: 60px;
  height: 1px;
  background: #c4c4c4;
`

const CadMain = styled.div`
  flex: 1;
  display: flex;
  min-height: 0;
`

const CadPanel = styled.div`
  display: flex;
  flex-direction: column;
  width: 129px;
  background: #27282a;
  border-right: 1px solid #1a1a1b;
  font-size: 8.800px;
`

const PanelHead = styled.div`
  display: flex;
  align-items: center;
  height: 17px;
  padding: 0 5px 0 13px;
  background: #1e1e20;
  color: #959595;
`

const PanelHeadTools = styled.div`
  display: flex;
  gap: 6px;
  align-items: center;
  margin-left: auto;
  color: #c9c9c9;
`

const PanelItem = styled.div`
  display: flex;
  align-items: center;
  height: 13px;
  margin-left: 3px;
  padding-left: 3px;
  background: #333436;
  color: #8d8d8d;
`

const PanelTree = styled.div`
  display: flex;
  flex-direction: column;
  height: 55px;
  margin-left: 3px;
  padding-top: 1px;
  background: #1e1f21;
`

const PanelRow = styled.div<{ $indent: number; $c?: string }>`
  display: flex;
  align-items: center;
  height: 13.500px;
  padding-left: ${({ $indent }) => $indent}px;
  gap: 3px;
  color: ${({ $c }) => $c ?? '#a9a9a9'};
  white-space: nowrap;
`

const BranchMark = styled.span`
  width: 0;
  height: 0;
  margin-right: 8px;
  border-left: 5px solid transparent;
  border-bottom: 5px solid ${CADBLUE};
`

const PanelFill = styled.div`
  flex: 1;
`

const PanelScroll = styled.div`
  display: flex;
  align-items: center;
  justify-content: space-between;
  height: 14px;
  padding: 0 3px 0 6px;
  background: #2a2b2d;
  color: #77787a;
`

const PanelBottom = styled.div`
  display: flex;
  align-items: center;
  height: 16px;
  padding-left: 3px;
  background: #202123;
  color: #a3a3a3;
  white-space: nowrap;
`

const PanelBottomTab = styled.span<{ $on?: boolean }>`
  padding: 2px ${({ $on }) => ($on ? 3 : 4)}px;
  background: ${({ $on }) => ($on ? '#4a4b4d' : 'transparent')};
  border-top: 1px solid ${({ $on }) => ($on ? '#5b7fb8' : 'transparent')};
`

const PanelArrows = styled.span`
  display: flex;
  align-items: center;
  gap: 6px;
  margin-left: 1px;
`

const WhiteArrow = styled.span<{ $dir: 'left' | 'right'; $c?: string }>`
  width: 0;
  height: 0;
  border-top: 4px solid transparent;
  border-bottom: 4px solid transparent;
  ${({ $dir, $c }) => ($dir === 'left' ? 'border-right' : 'border-left')}: 4px solid ${({ $c }) => $c ?? '#ddd'};
`

const CadCenter = styled.div`
  flex: 1;
  display: flex;
  flex-direction: column;
  min-width: 0;
`

const CadTabs = styled.div`
  display: flex;
  align-items: stretch;
  height: 18px;
  background: #202021;
  position: relative;
`

const CadTab = styled.div<{ $on?: boolean; $w: number }>`
  display: flex;
  align-items: center;
  gap: 8px;
  width: ${({ $w }) => $w}px;
  padding-left: ${({ $on }) => ($on ? 6 : 3)}px;
  background: ${({ $on }) => ($on ? '#3a3a3c' : '#2b2b2d')};
  color: ${({ $on }) => ($on ? '#c2c2c2' : '#9a9a9a')};
  font-size: 8.800px;
  white-space: nowrap;
`

const TabPlus = styled.span`
  display: flex;
  align-items: center;
  padding: 0 4px;
  background: #2b2b2d;
  color: #c9c9c9;
  font-size: 12px;
`

const TabMenuCaret = styled.span`
  position: absolute;
  right: 27px;
  top: 8px;
  border-left: 3.500px solid transparent;
  border-right: 3.500px solid transparent;
  border-top: 4px solid #fff;
`

const CadStage = styled.div`
  flex: 1;
  display: flex;
  min-height: 0;
`

const Canvas = styled.div`
  flex: 1;
  position: relative;
  background: #000;
  overflow: hidden;
`

const CanvasArt = styled.svg`
  position: absolute;
  left: 0;
  top: 0;
  width: 807px;
  height: 821px;
  fill: none;
  stroke: #c8c8c8;
  stroke-width: 1;
`

const SectionLabel = styled.div<{ $x: number; $sx: number }>`
  position: absolute;
  left: ${({ $x }) => $x - 1089}px;
  top: 364px;
  color: #00f000;
  font-family: "Liberation Sans", sans-serif;
  font-size: 18px;
  font-weight: 700;
  line-height: 22px;
  white-space: nowrap;
  transform: scaleX(${({ $sx }) => $sx});
  transform-origin: left center;
`

const CoordBox = styled.div`
  position: absolute;
  right: 23px;
  bottom: 2px;
  display: flex;
  align-items: center;
  justify-content: center;
  width: 153px;
  height: 19px;
  background: #2a2a2c;
  color: #d0d0d0;
  font-size: 9.500px;
`

const GridButton = styled.div`
  position: absolute;
  right: 6px;
  bottom: 5px;
  display: grid;
  grid-template-columns: 6px 6px;
  gap: 1px;
`

const GridDot = styled.span`
  width: 6px;
  height: 6px;
  background: #eee;
`

const SideStrip = styled.div`
  display: flex;
  flex-direction: column;
  align-items: center;
  width: 24px;
  padding-top: 4px;
  gap: 3px;
  background: #29292b;
  border-left: 1px solid #3a3a3c;
  color: #ccc;
`

const SideDots = styled.span`
  width: 14px;
  height: 3px;
  margin-bottom: 4px;
  background: repeating-linear-gradient(90deg, #6c6c6e 0 1px, transparent 1px 2px);
`

const LayoutBar = styled.div`
  display: flex;
  align-items: center;
  height: 16px;
  padding-left: 2px;
  gap: 1px;
  background: #2c2c2e;
  color: #999;
`

const NavButton = styled.span`
  display: flex;
  align-items: center;
  justify-content: center;
  width: 12px;
  height: 12px;
  background: #3a3a3c;
`

const LayoutTab = styled.span<{ $on?: boolean; $w: number }>`
  display: flex;
  align-items: center;
  justify-content: center;
  width: ${({ $w }) => $w}px;
  height: 13px;
  padding-right: ${({ $on }) => ($on ? 0 : 8)}px;
  background: ${({ $on }) => ($on ? '#3f3f41' : '#343436')};
  color: ${({ $on }) => ($on ? '#c6c6c6' : '#6e6e70')};
  font-weight: ${({ $on }) => ($on ? 700 : 400)};
  letter-spacing: 0.500px;
  clip-path: polygon(0 0, 100% 0, 88% 100%, 0 100%);
`

const LayoutAdd = styled.span`
  display: flex;
  align-items: center;
  justify-content: center;
  width: 11px;
  height: 11px;
  margin-left: 3px;
  background: #424244;
  color: #aaa;
  font-size: 11px;
`

const CommandArea = styled.div`
  display: flex;
  height: 120px;
  background: #1a1c1f;
`

const CommandGutter = styled.div`
  display: flex;
  flex-direction: column;
  align-items: center;
  width: 20px;
  padding-top: 3px;
  gap: 6px;
  background: #2a2b2d;
`

const GutterBars = styled.span`
  width: 9px;
  height: 7px;
  border-top: 1.500px solid #ddd;
  border-bottom: 1.500px solid #ddd;
  background: linear-gradient(#ddd, #ddd) center / 100% 1.500px no-repeat;
`

const CommandBody = styled.div`
  flex: 1;
  display: flex;
  flex-direction: column;
`

const CommandLog = styled.div`
  flex: 1;
  padding: 1px 0 0 1px;
  color: #aeaeae;
  font-family: "Noto Sans", sans-serif;
  font-size: 9.700px;
  line-height: 11px;
  white-space: pre;
`

const CommandInput = styled.div`
  display: flex;
  align-items: center;
  height: 18px;
  padding-left: 6px;
  gap: 5px;
  border-top: 1px solid #2c2e31;
  color: #a8a8a8;
  font-size: 10.500px;
`

const PromptIcon = styled.span`
  display: flex;
  align-items: center;
  justify-content: center;
  width: 12px;
  height: 12px;
  background: #cfcfcf;
  border-radius: 1px;
  color: #333;
  font-size: 7px;
  font-weight: 700;
`

const CadFooter = styled.div`
  height: 5px;
  background: #2f3030;
`

const ribbon = [
  {
    w: 233,
    caption: 'Material Properties',
    items: [
      { w: 50, icon: 'material', l: ['Material', 'Properties'] },
      { w: 56, icon: 'timeDep', l: ['Time', 'Dependent'], c: true },
      { w: 46, icon: 'change', l: ['Change', 'Property'] },
      { w: 39, icon: 'link', l: ['Material', 'Link'] },
      { w: 41, icon: 'plastic', l: ['Plastic', 'Material'] },
    ],
  },
  {
    w: 231,
    caption: 'Section Properties',
    items: [
      { w: 54, icon: 'section', l: ['Section', 'Properties'] },
      { w: 40, icon: 'thickness', l: ['Thickness', ''] },
      { w: 46, icon: 'tapered', l: ['Tapered', 'Group'] },
      { w: 43, icon: 'manager', l: ['Section', 'Manager'], c: true },
      { w: 47, icon: 'effective', l: ['Effective', 'Width'] },
    ],
  },
  {
    w: 193,
    caption: 'Inelastic Properties',
    items: [
      { w: 44, icon: 'moment', l: ['Moment', 'Curvature'] },
      { w: 60, icon: 'inelControl', l: ['Inel. Control', 'Data'], c: true },
      { w: 41, icon: 'hinge', l: ['Inelastic', 'Hinge'], c: true },
      { w: 47, icon: 'inelMaterial', l: ['Inelastic', 'Material'], c: true },
    ],
  },
  { w: 54, caption: 'Damping', items: [{ w: 53, icon: 'damping', l: ['Group', 'Damping'], c: true }] },
  { w: 44, caption: 'Tables', items: [{ w: 43, icon: 'propTables', l: ['Property', 'Tables'], c: true }] },
]

const menuTabs = ['Project', 'View', 'Structure', 'Node/Element', 'Properties', 'Boundary', 'Load', 'Analysis', 'Results', 'Pushover', 'Design', 'Rating', 'Apps']

const toolGroups = [
  ['doc', 'folder', 'folderSave'],
  ['sel1', 'sel2', 'sel3', 'sel4', 'sel5', 'sel6', 'sel7', 'sel8'],
  ['act1', 'act2', 'act3', 'act4', 'act5', 'act6'],
  ['view1', 'view2', 'view3', 'view4', 'view5', 'view6', 'view7', 'view8'],
]

const treeRows = [
  { icon: 'tableS', label: 'Structure Tables' },
  { icon: 'tableR', label: 'Result Tables' },
  { icon: 'tableD', label: 'Design Tables' },
  { icon: 'tableQ', label: 'Query Tables' },
]

const zoomTools = ['zFit', 'zBox', 'zIn', 'zOut', 'zDyn', 'zPrev', 'hand', 'orbit', 'rotate', 'rotate2', 'cube', 'cubeBlue', 'cubeSide', 'cubeFront']

const dialogButtons = ['Add...', 'Modify...', 'Delete', 'Copy', 'Import', 'Renumber']

const cadMenus = ['File', 'Edit', 'View', 'Insert', 'Format', 'Tools', 'Draw', 'Dimension', 'Modify', 'Window', 'Help', 'Extreme']

const cadRowOne = [
  ['slabBulb', 'slabLines', 'slabFill'],
  ['slabStar', 'slabStarL', 'slabStarF'],
  ['slabLock', 'slabLockL', 'slabHook', '^'],
  ['line', 'dbl', 'lineInfo', 'lines', 'arrowLine', 'curve', 'pen', 'hexagon', 'rect', 'arc', 'circlePlus', 'circles', 'polyN', 'polyM', 'ellipseDot', 'triFill', 'hatch', 'hatchPen', 'blobs', 'dashSq', 'gridInfo', '^'],
  ['letterP', 'triPair', 'fan', 'letterC', 'sqPen', '^'],
]

const cadRowThree = ['bar3', 'ibox', 'coord', 'blueCursor', 'layout', 'stackBlue', 'thin', 'lines4', 'refresh', 'scale', 'stretch', 'tilt']

const CivilPane = () => (
  <CivilWindow>
    <TitleBar>
      <AppBadge>cn</AppBadge>
      <span>MIDAS CIVIL NX 2025 - [제목 없음 *] - [MIDAS CIVIL NX]</span>
      <WindowButtons>
        <Icon set={cadIcons} name="line" size={9} />
        <Icon set={cadIcons} name="rect" size={9} />
        <Svg viewBox="0 0 16 16" $s={9}><path d="M2 2l12 12M14 2 2 14" /></Svg>
      </WindowButtons>
    </TitleBar>
    <MenuBar>
      <Burger>
        <BurgerLines />
        <FloatCaret />
      </Burger>
      {menuTabs.map((t) => (
        <MenuTab key={t} $active={t === 'Properties'}>
          {t}
        </MenuTab>
      ))}
      <MenuTools>
        <Svg viewBox="0 0 16 16" $s={11}><circle cx="7" cy="7" r="5" /><path d="M11 11l4 4" /></Svg>
        <Svg viewBox="0 0 16 16" $s={11}><circle cx="11" cy="5" r="3.500" /><path d="M8.500 7.500 2 14l2 1M4.500 11.500l2 2" /></Svg>
        <Svg viewBox="0 0 16 16" $s={11}><circle cx="8" cy="8" r="6.500" /><path d="M6 6c0-3 4-3 4 0 0 2-2 2-2 4M8 12v.5" /></Svg>
        <Svg viewBox="0 0 16 16" $s={10} $w={1.500}><path d="M2 8h12" /></Svg>
        <Svg viewBox="0 0 16 16" $s={10} $w={1.500}><path d="M2 5h9v9H2zM5 5V2h9v9h-3" /></Svg>
        <Svg viewBox="0 0 16 16" $s={10} $c="#e8eaec" $w={2}><path d="M2 2l12 12M14 2 2 14" /></Svg>
      </MenuTools>
    </MenuBar>
    <RibbonBar>
      <RibbonSide>
        <Svg viewBox="0 0 16 24" $s={20}><path d="M2 9h12v6H2zM8 2v5M6 5h4M8 17v5M6 19h4" /></Svg>
      </RibbonSide>
      {ribbon.map((g) => (
        <RibbonGroup key={g.caption} $w={g.w}>
          <RibbonItems>
            {g.items.map((it) => (
              <RibbonItem key={it.icon} $w={it.w}>
                <Icon set={ribbonIcons} name={it.icon} size={21} />
                <RibbonLabel>
                  {it.l[0]}
                  <br />
                  {it.l[1]}
                  {it.c && <Chevron />}
                </RibbonLabel>
              </RibbonItem>
            ))}
          </RibbonItems>
          <RibbonCaption>{g.caption}</RibbonCaption>
        </RibbonGroup>
      ))}
    </RibbonBar>
    <ToolStrip>
      {toolGroups.map((group, i) => (
        <React.Fragment key={group[0]}>
          {i > 0 && <ToolSep />}
          {group.map((name) => (
            <ToolCell key={name} $on={name === 'view3'}>
              <Icon set={toolIcons} name={name} size={14} />
            </ToolCell>
          ))}
        </React.Fragment>
      ))}
    </ToolStrip>
    <CivilBody>
      <Sidebar>
        <PaneTabs>
          <PaneTab $on>Tree Menu</PaneTab>
          <PaneTab>Task Pane</PaneTab>
          <PaneTools $gap={4} $end={3}>
            <Icon set={toolIcons} name="paneA" size={12} />
            <Icon set={toolIcons} name="paneB" size={12} />
          </PaneTools>
        </PaneTabs>
        <PaneTabs>
          <PaneTab $on>Tables</PaneTab>
          <PaneTab>Works</PaneTab>
          <PaneTab>Group</PaneTab>
          <PaneTab>Report</PaneTab>
          <PaneTools $gap={10} $end={6}>
            <MiniArrow $dir="left" />
            <MiniArrow $dir="right" />
          </PaneTools>
        </PaneTabs>
        <SearchBox>
          <Svg viewBox="0 0 16 16" $s={10} $c="#b5b9be"><circle cx="7" cy="7" r="5" /><path d="M11 11l4 4" /></Svg>
          Search
        </SearchBox>
        <TreeRoot>
          <Twisty $open />
          <TreeGlyph><Icon set={toolIcons} name="tableT" size={12} /></TreeGlyph>
          Tables
        </TreeRoot>
        <TreeBranch>
          {treeRows.map((row) => (
            <TreeRow key={row.label}>
              <Twisty />
              <TreeGlyph><Icon set={toolIcons} name={row.icon} size={12} /></TreeGlyph>
              {row.label}
            </TreeRow>
          ))}
        </TreeBranch>
      </Sidebar>
      <Workspace>
        <DocTabs>
          <DocTab>
            Start Page<TabClose>✕</TabClose>
          </DocTab>
          <DocTab $on>
            MIDAS CIVIL NX<TabClose>✕</TabClose>
          </DocTab>
          <DocArrows>
            <MiniArrow $dir="left" />
            <MiniArrow $dir="right" />
          </DocArrows>
        </DocTabs>
        <Viewport>
          <FloatBar>
            <FloatIcon $w={18}><Icon set={toolIcons} name="undo" size={14} /></FloatIcon>
            <FloatCaret />
            <FloatIcon $w={18} $dim><Icon set={toolIcons} name="redo" size={14} /></FloatIcon>
            <FloatCaret $dim />
            <FloatIcon $w={24}><Icon set={toolIcons} name="page" size={14} /></FloatIcon>
            <FloatIcon $w={24}><Icon set={toolIcons} name="mesh" size={14} /></FloatIcon>
            <FloatSelect $w={105}>
              Base<SelectTick />
            </FloatSelect>
            <FloatIcon $w={23.500}><Icon set={toolIcons} name="ibeam" size={14} /></FloatIcon>
            <FloatIcon $w={23.500}><Icon set={toolIcons} name="sel1" size={14} /></FloatIcon>
            <FloatSelect $w={82}><span /><SelectTick /></FloatSelect>
            <FloatIcon><Icon set={toolIcons} name="sel4" size={14} /></FloatIcon>
            <FloatSelect $w={82}><span /><SelectTick /></FloatSelect>
            <FloatIcon $w={24}><Icon set={toolIcons} name="chat" size={14} /></FloatIcon>
            <FloatIcon $on><Icon set={toolIcons} name="lock" size={14} /></FloatIcon>
            <FloatIcon $dim><Icon set={toolIcons} name="lock" size={14} /></FloatIcon>
          </FloatBar>
          <ZoomBar>
            {zoomTools.map((z) => (
              <ZoomCell key={z}><Icon set={toolIcons} name={z} size={14} /></ZoomCell>
            ))}
          </ZoomBar>
          <Gizmo viewBox="0 0 110 40">
            <path d="M19 15 45 26" stroke="#9fc7b0" strokeWidth="1.500" />
            <path d="M45 26 89 19" stroke="#e0897f" strokeWidth="1.500" />
            <rect x="42" y="23" width="6" height="6" fill="none" stroke="#a7abb0" />
            <text x="5" y="13" fontSize="9" fill="#8fbf9f">Y</text>
            <text x="98" y="20" fontSize="10" fill="#e0897f">X</text>
          </Gizmo>
          <Dialog>
            <DialogHead>
              Properties
              <Svg viewBox="0 0 16 16" $s={8} $c="#8f969b"><path d="M2 2l12 12M14 2 2 14" /></Svg>
            </DialogHead>
            <DialogTabs>
              <DialogTab $w={54}>Material</DialogTab>
              <DialogTab $w={55} $on>Section</DialogTab>
              <DialogTab $w={54}>Thickness</DialogTab>
            </DialogTabs>
            <DialogFrame>
              <DialogLeft>
                <DialogList>
                  <ListHead>
                    <ListCol $end>ID</ListCol>
                    <ListCol>Name</ListCol>
                    <ListCol>Type</ListCol>
                    <ListCol>Shape</ListCol>
                  </ListHead>
                </DialogList>
                <DialogNote />
              </DialogLeft>
              <DialogRight>
                {dialogButtons.map((b) => (
                  <GreyButton key={b}>{b}</GreyButton>
                ))}
                <Preview />
              </DialogRight>
            </DialogFrame>
            <DialogFoot>
              <CloseButton>Close</CloseButton>
            </DialogFoot>
          </Dialog>
          <CommandDock>
            <DockUpper>
              <DockGrip>||||</DockGrip>
            </DockUpper>
            <DockHandle><DockBar /></DockHandle>
            <DockInput>
              <DockCommand>
                Command
                <DockDots />
              </DockCommand>
              <WhiteDown />
            </DockInput>
          </CommandDock>
        </Viewport>
      </Workspace>
    </CivilBody>
    <StatusBar>
      <StatusCell $w={114} $pad={4}>For Help, press F1</StatusCell>
      <StatusCell $w={61}>None!</StatusCell>
      <StatusCell $w={149}><StatusChip>U</StatusChip>U: 0, 0, 0</StatusCell>
      <StatusCell $w={150}><StatusChip>G</StatusChip>G: 0, 0, 0</StatusCell>
      <StatusCell $w={227}>N: 0, E: 0</StatusCell>
      <StatusSelect $w={42}>kN<SelectTick $c="#5c6166" /></StatusSelect>
      <StatusSelect $w={42}>m<SelectTick $c="#5c6166" /></StatusSelect>
      <Icon set={toolIcons} name="view4" size={13} color="#6a7077" />
      <SliderBox><SliderTrack /><SliderThumb /></SliderBox>
      <StatusSelect $w={42}>100%<SelectTick $c="#5c6166" /></StatusSelect>
    </StatusBar>
  </CivilWindow>
)

const CadPane = () => (
  <CadWindow>
    <CadHead>
      <CadLogoCell><CadLogo /></CadLogoCell>
      <CadHeadRight>
        <CadQuick>
          {['qDoc', 'qFolder', 'qImport', 'qImport', 'qFolder', 'qPrint', 'qSheet', 'qSheet', 'qBack', 'qFwd'].map((q, i) => (
            <QuickCell key={i}><Icon set={cadIcons} name={q} size={13} /></QuickCell>
          ))}
          <QuickCaret />
          <CadTitle>midas CAD - MCAD_SPC_section 재성성.dwg</CadTitle>
          <CadControls>
            <Svg viewBox="0 0 16 16" $s={11} $w={2}><path d="M2 11h12" /></Svg>
            <Svg viewBox="0 0 16 16" $s={11} $w={1.500}><rect x="2" y="3" width="12" height="10" /></Svg>
            <Svg viewBox="0 0 16 16" $s={11} $w={2}><path d="M3 3l10 10M13 3 3 13" /></Svg>
          </CadControls>
        </CadQuick>
        <CadMenu>
          {cadMenus.map((m) => (
            <CadMenuItem key={m} $blue={m === 'Extreme'}>{m}</CadMenuItem>
          ))}
        </CadMenu>
      </CadHeadRight>
    </CadHead>
    <CadRow $h={22} $bg="#19191b">
      <CadTools $w={696}>
        <Grip />
        {cadRowOne.map((group, gi) => (
          <React.Fragment key={gi}>
            {gi > 0 && <CadSep />}
            {group.map((name, i) =>
              name === '^' ? (
                <CadCaret key={i} />
              ) : (
                <CadCell key={i}><Icon set={cadIcons} name={name} size={14} /></CadCell>
              )
            )}
          </React.Fragment>
        ))}
      </CadTools>
    </CadRow>
    <CadRow $h={21} $bg="#242526" $pad={5}>
      <Grip />
      <CadCell><Icon set={cadIcons} name="stack" size={15} /></CadCell>
      <Grip />
      <Combo $w={179}>
        <Icon set={cadIcons} name="layerBulb" size={12} />
        <Icon set={cadIcons} name="sun" size={12} />
        <Icon set={cadIcons} name="sunDot" size={12} />
        <Icon set={cadIcons} name="padlock" size={12} />
        <Swatch $w={8} />
        <span>&nbsp;0</span>
        <ComboArrow />
      </Combo>
      <CadSep />
      <Combo $w={120}>
        <Swatch $w={29} />
        ByLayer
        <ComboArrow />
      </Combo>
      <CadSep />
      <Combo $w={120}>
        <LineSample />
        ByLayer
      </Combo>
      <Grip $after={5} />
      {['stack', 'stack', 'slabBulb', 'stack', 'stack', 'slabLines'].map((n, i) => (
        <CadCell key={i}><Icon set={cadIcons} name={n} size={13} /></CadCell>
      ))}
      <CadCaret />
      <Grip />
      <CadCell $w={19}><Icon set={cadIcons} name="text" size={15} /></CadCell>
      <Combo $w={75}>Standard<ComboArrow /></Combo>
      <CadSep />
      <Combo $w={52}>2,5<ComboArrow /></Combo>
      <CadSep />
      <CadCell><Icon set={cadIcons} name="dimArrow" size={15} /></CadCell>
      <Combo $w={75}>TableDimSt..<ComboArrow /></Combo>
      <CadSep />
      <CadCell><Icon set={cadIcons} name="leader" size={14} /></CadCell>
      <Combo $w={75}>Standard<ComboArrow /></Combo>
    </CadRow>
    <CadRow $h={21} $bg="#1f1f20">
      <CadTools $w={227}>
        <Grip />
        {cadRowThree.map((n) => (
          <CadCell key={n}><Icon set={cadIcons} name={n} size={14} /></CadCell>
        ))}
      </CadTools>
    </CadRow>
    <CadMain>
      <CadPanel>
        <PanelHead>
          Window
          <PanelHeadTools>
            <Svg viewBox="0 0 16 16" $s={8} $w={2}><path d="M4 2h8M5 2v6l-2 2h10l-2-2V2M8 10v5" /></Svg>
            <Svg viewBox="0 0 16 16" $s={8}><path d="M3 3l10 10M13 3 3 13" /></Svg>
          </PanelHeadTools>
        </PanelHead>
        <PanelItem>Item</PanelItem>
        <PanelTree>
          <PanelRow $indent={9} $c="#d9b95b"><Icon set={cadIcons} name="hatch" size={9} color="#aaa" />&nbsp;Project</PanelRow>
          <PanelRow $indent={3}><BranchMark /><Icon set={cadIcons} name="gridInfo" size={11} color="#aaa" />Opened Drawing</PanelRow>
          <PanelRow $indent={27}><Icon set={cadIcons} name="rect" size={10} color="#aaa" />&nbsp;cDrawing1</PanelRow>
          <PanelRow $indent={27}><Icon set={cadIcons} name="gridInfo" size={11} color="#aaa" />MCAD_SPC_section</PanelRow>
        </PanelTree>
        <PanelFill />
        <PanelScroll>
          <WhiteArrow $dir="left" $c="#666" />
          ...
          <WhiteArrow $dir="right" $c="#666" />
        </PanelScroll>
        <PanelBottom>
          <PanelBottomTab $on>Window</PanelBottomTab>
          <PanelBottomTab>Draw Lib.</PanelBottomTab>
          <PanelBottomTab>Pro</PanelBottomTab>
          <PanelArrows>
            <WhiteArrow $dir="left" />
            <WhiteArrow $dir="right" />
          </PanelArrows>
        </PanelBottom>
      </CadPanel>
      <CadCenter>
        <CadTabs>
          <CadTab $w={50}>cDrawing1</CadTab>
          <CadTab $w={88} $on>
            MCAD_...성.dwg
            <Svg viewBox="0 0 16 16" $s={7} $w={2}><path d="M2 2l12 12M14 2 2 14" /></Svg>
          </CadTab>
          <TabPlus>+</TabPlus>
          <TabMenuCaret />
        </CadTabs>
        <CadStage>
          <Canvas>
            <CanvasArt viewBox="1089 118 807 821">
              {/* crosshair */}
              <path d="M1168 340.500h106M1220.500 288v105" stroke="#b8b8b8" />
              <rect x="1217.500" y="337.500" width="6" height="6" stroke="#b8b8b8" />
              {/* girder, mold and composite sections */}
              <g transform="translate(1090 470) scale(0.5294 0.3333)">
                {[
                  'M19 168Q265 155 515 168V180H492L480 180H60L40 180H19Z',
                  'M40 180 125 270Q170 300 228 310H305Q360 300 405 282Q450 250 492 180',
                  'M48 182 130 276Q175 304 230 306H305Q358 296 402 276Q445 246 486 182',
                  'M62 185 80 178 130 176 157 185V270H130L90 235 62 198Z',
                  'M163 187 185 175 232 172 264 183V302L200 298 170 285 163 265Z',
                  'M272 183 300 174 345 172 372 185V270L358 290 330 298 272 302Z',
                  'M378 187 410 178 450 176 472 185V198L440 235 400 268 378 270Z',
                  'M788 178H803V268H788ZM795 178V268M788 184H803M788 262H803',
                  'M1142 170H1443V180H1142ZM1110 182H1476M1112 182V258M1155 182V258M1109 258H1157M1430 182V258M1474 182V258M1428 258H1476',
                  'M1120 182V190M1130 182V190M1140 182V190M1438 182V190M1450 182V190M1462 182V190M1120 250V258M1128 250V258M1136 250V258M1144 250V258M1438 250V258M1446 250V258M1454 250V258M1462 250V258',
                  'M1293 182V204M1283 182H1303M1287 204H1299',
                ].map((d) => (
                  <path key={d} d={d} vectorEffect="non-scaling-stroke" strokeWidth="0.900" />
                ))}
              </g>
              {/* ucs */}
              <rect x="1116.500" y="896.500" width="16" height="16" stroke="#d8d8d8" />
              <path d="M1124.500 836V904.500H1192" stroke="#9a9a9a" strokeWidth="1.300" />
              <path d="M1124.500 813 1116.500 836H1132.500ZM1192 896.500V912L1215 904.500Z" stroke="#d8d8d8" />
              <path d="M1231 896 1243 911M1243 896 1231 911" stroke="#b8b8b8" />
              <path d="M1117 783 1124 790 1131 783M1124 790V798" stroke="#b8b8b8" />
            </CanvasArt>
            <SectionLabel $x={1101} $sx={0.85}>Girder (Plane Type)</SectionLabel>
            <SectionLabel $x={1446} $sx={0.84}>Mold (Line Type)</SectionLabel>
            <SectionLabel $x={1685} $sx={0.835}>Composite (Composite Type)</SectionLabel>
            <CoordBox>10560.2447,20437.1784,0.0000</CoordBox>
            <GridButton>
              <GridDot /><GridDot /><GridDot /><GridDot />
            </GridButton>
          </Canvas>
          <SideStrip>
            <SideDots />
            <Icon set={cadIcons} name="lineInfo" size={15} />
            <Icon set={cadIcons} name="lines" size={15} />
            <Icon set={cadIcons} name="gridInfo" size={15} />
            <Icon set={cadIcons} name="gridBlue" size={15} />
            <WhiteArrow $dir="right" $c="#aaa" />
          </SideStrip>
        </CadStage>
        <LayoutBar>
          {['navFirst', 'navPrev', 'navNext', 'navLast'].map((n) => (
            <NavButton key={n}><Icon set={cadIcons} name={n} size={8} /></NavButton>
          ))}
          <LayoutTab $on $w={41}>Model</LayoutTab>
          <LayoutTab $w={52}>Layout1</LayoutTab>
          <LayoutAdd>+</LayoutAdd>
        </LayoutBar>
      </CadCenter>
    </CadMain>
    <CommandArea>
      <CommandGutter>
        <SideDots />
        <GutterBars />
      </CommandGutter>
      <CommandBody>
        <CommandLog>
          {'Command:  _OPEN\nCommand:\nCommand:  _SECTIONPROPERTY\nCommand:  _SECTIONPROPERTY'}
        </CommandLog>
        <CommandInput>
          <PromptIcon>&gt;_</PromptIcon>
          Command:
        </CommandInput>
      </CommandBody>
    </CommandArea>
    <CadFooter />
  </CadWindow>
)

const App: React.FC = () => (
  <>
    <GlobalStyle />
    <Page>
      <CivilPane />
      <CadPane />
    </Page>
  </>
)

export default App
